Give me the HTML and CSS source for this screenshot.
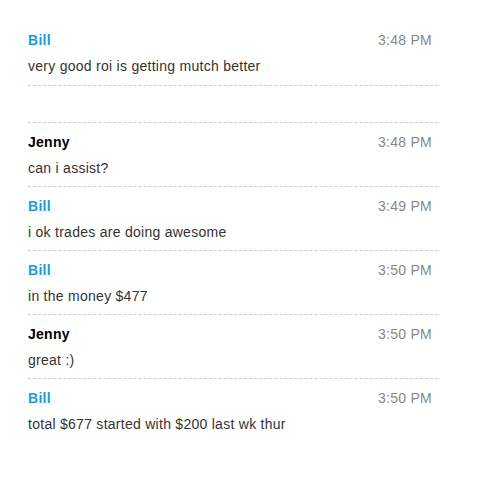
FILE: index.html
```html
<!DOCTYPE html>
<html lang="en">
<head>
    <meta charset="UTF-8">
    <meta name="viewport" content="width=device-width, initial-scale=1.0">
    <title>Chat History</title>
    <link rel="stylesheet" href="styles.css">
</head>
<body>
    <div class="chat-log">
        <div class="message first">
            <div class="message-head">
                <span class="author bill">Bill</span>
                <span class="time">3:48 PM</span>
            </div>
            <div class="text">very good roi is getting mutch better</div>
        </div>
        <div class="message empty"></div>
        <div class="message">
            <div class="message-head">
                <span class="author">Jenny</span>
                <span class="time">3:48 PM</span>
            </div>
            <div class="text">can i assist?</div>
        </div>
        <div class="message">
            <div class="message-head">
                <span class="author bill">Bill</span>
                <span class="time">3:49 PM</span>
            </div>
            <div class="text">i ok trades are doing awesome</div>
        </div>
        <div class="message">
            <div class="message-head">
                <span class="author bill">Bill</span>
                <span class="time">3:50 PM</span>
            </div>
            <div class="text">in the money $477</div>
        </div>
        <div class="message">
            <div class="message-head">
                <span class="author">Jenny</span>
                <span class="time">3:50 PM</span>
            </div>
            <div class="text">great :)</div>
        </div>
        <div class="message last">
            <div class="message-head">
                <span class="author bill">Bill</span>
                <span class="time">3:50 PM</span>
            </div>
            <div class="text">total $677 started with $200 last wk thur</div>
        </div>
    </div>
</body>
</html>
```

FILE: styles.css
```css
body {
    font-family: 'Liberation Sans', Arial, sans-serif;
    background-color: #fff;
    margin: 0;
    padding: 0;
    letter-spacing: 0.27px;
}

.chat-log {
    width: 410px;
    margin: 22px 0 0 28px;
}

.message {
    border-top: 1px dashed #ccc;
    padding: 9px 0 8px 0;
}

.message.first {
    border-top: none;
    padding-top: 8px;
    padding-bottom: 9px;
}

.message.empty {
    height: 19px;
}

.message.last {
    padding-bottom: 0;
}

.message-head {
    display: flex;
    justify-content: space-between;
    align-items: center;
    height: 20px;
    line-height: 20px;
    padding-right: 6px;
}

.author {
    font-size: 14px;
    font-weight: bold;
    color: #000;
}

.author.bill {
    color: #1b9bd6;
}

.time {
    font-size: 14px;
    color: #888;
}

.text {
    font-size: 14px;
    line-height: 20px;
    color: #333;
    margin-top: 6px;
}
```
